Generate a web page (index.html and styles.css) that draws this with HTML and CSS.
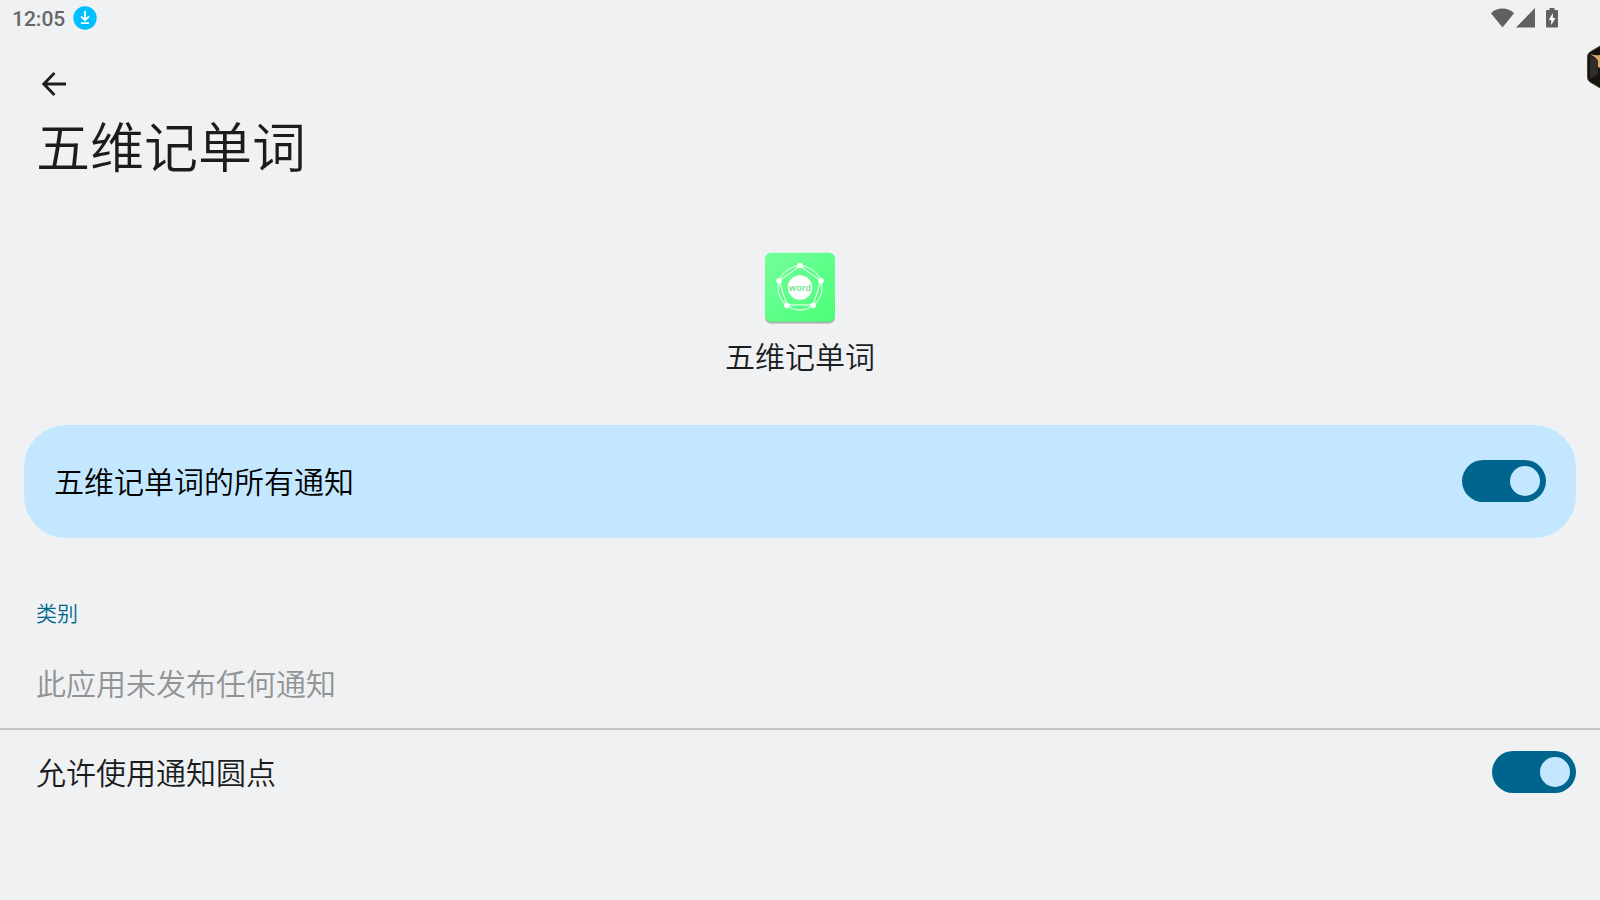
FILE: index.html
```html
<!DOCTYPE html>
<html lang="zh-CN">
<head>
    <meta charset="UTF-8">
    <meta name="viewport" content="width=device-width, initial-scale=1.0">
    <title>五维记单词</title>
    <link rel="stylesheet" href="styles.css">
</head>
<body>
    <div class="status-bar">
        <div class="status-left">
            <span class="clock">12:05</span>
            <svg class="download" width="24" height="24" viewBox="0 0 24 24" aria-hidden="true">
                <circle cx="12" cy="12" r="11.7" fill="#00bfff"/>
                <path d="M12 5v9M8 10.300l4 4 4-4M8 17.200h8" fill="none" stroke="#fff" stroke-width="1.8"/>
            </svg>
        </div>
        <div class="status-right">
            <svg width="24" height="20" viewBox="0 0 24 20" aria-hidden="true">
                <path d="M1 5.200C4 2 8 .5 12.500 .5s8.500 1.500 11.500 4.700L12.500 19.500z" fill="#5f6062"/>
            </svg>
            <svg width="19" height="20" viewBox="0 0 19 20" aria-hidden="true">
                <path d="M19 0v19.500H0z" fill="#5f6062"/>
            </svg>
            <svg class="battery" width="12" height="20" viewBox="0 0 12 20" aria-hidden="true">
                <path d="M3.500 0h5v2H11a1 1 0 0 1 1 1v15.500a1 1 0 0 1-1 1H1a1 1 0 0 1-1-1V3a1 1 0 0 1 1-1h2.500z" fill="#5f6062"/>
                <path d="M6.800 5v5H9.500L5.200 17v-5H2.800z" fill="#fff"/>
            </svg>
        </div>
    </div>

    <!-- botão flutuante preso na borda direita -->
    <div class="floating">
        <svg width="13" height="44" viewBox="0 0 13 44" aria-hidden="true">
            <path d="M14 .5L3 7Q.5 8.500 .5 11.500v21Q.5 35.500 3 37l11 6.500z" fill="#17140f" stroke="#4b4636"/>
            <path d="M3 11l8 4v14l-8 5z" fill="#302e2b"/>
            <path d="M3 9q6 2 10 1v13l-2-1v-6q-1-3-8-7z" fill="#d9a970"/>
        </svg>
    </div>

    <header class="header">
        <button type="button" class="back" aria-label="返回">
            <svg width="24" height="24" viewBox="0 0 24 24" aria-hidden="true">
                <path d="M24 12H2M12.500 1L1.800 12l10.700 11" fill="none" stroke="#1a1c1e" stroke-width="2.800"/>
            </svg>
        </button>
        <h1>五维记单词</h1>
    </header>

    <main>
        <section class="app">
            <svg class="app-icon" width="72" height="72" viewBox="0 0 72 72" aria-hidden="true">
                <defs>
                    <linearGradient id="verde" x1="0" y1="0" x2="1" y2="1">
                        <stop offset="0" stop-color="#73ff9c"/>
                        <stop offset="1" stop-color="#4bff77"/>
                    </linearGradient>
                </defs>
                <rect x="1" y="2" width="70" height="69.500" rx="6" fill="#a9b0ac"/>
                <rect x="1" y=".8" width="70" height="69" rx="6" fill="url(#verde)"/>
                <g fill="none" stroke="#fff">
                    <circle cx="36" cy="36" r="22"/>
                    <path d="M36 14l21 15-8 24H23l-8-24z"/>
                </g>
                <g fill="#fff">
                    <circle cx="36" cy="35.500" r="12.200"/>
                    <circle cx="36" cy="13.500" r="2.800"/>
                    <circle cx="57" cy="28.800" r="2.800"/>
                    <circle cx="49" cy="53.500" r="2.800"/>
                    <circle cx="23" cy="53.500" r="2.800"/>
                    <circle cx="15" cy="28.800" r="2.800"/>
                </g>
                <text class="word" x="36" y="39" text-anchor="middle">word</text>
            </svg>
            <p class="app-name">五维记单词</p>
        </section>

        <div class="card">
            <label for="todas">五维记单词的所有通知</label>
            <input type="checkbox" class="switch" id="todas" role="switch" checked>
        </div>

        <section class="category">
            <h2>类别</h2>
            <p>此应用未发布任何通知</p>
        </section>

        <div class="row">
            <label for="ponto">允许使用通知圆点</label>
            <input type="checkbox" class="switch" id="ponto" role="switch" checked>
        </div>
    </main>
</body>
</html>
```
FILE: styles.css
```css
body {
    font-family: Roboto, 'Noto Sans CJK SC', sans-serif;
    margin: 0;
    background-color: #eff1f3;
    color: #1a1c1e;
    font-size: 30px;
    font-weight: 350;
    line-height: 44px;
}
h1, h2, p {
    margin: 0;
    font-weight: inherit;
}
svg {
    display: block;
}
.status-bar {
    display: flex;
    justify-content: space-between;
    align-items: center;
    height: 36px;
    padding: 0 42px 0 12px;
}
.status-left, .status-right {
    display: flex;
    align-items: center;
}
.status-left {
    gap: 8px;
}
.status-right {
    gap: 2px;
}
.clock {
    font-size: 21px;
    font-weight: 500;
    line-height: 36px;
    padding-top: 2px;
    color: #66676a;
}
.battery {
    margin-left: 9px;
}
.floating {
    position: absolute;
    top: 45px;
    right: 0;
}
.header {
    padding: 30px 36px 0;
}
.back {
    display: flex;
    align-items: center;
    justify-content: center;
    width: 36px;
    height: 36px;
    padding: 0;
    border: none;
    background: none;
    cursor: pointer;
}
h1 {
    font-size: 54px;
    line-height: 80px;
    margin-top: 8px;
}
.app {
    display: flex;
    flex-direction: column;
    align-items: center;
    gap: 12px;
    margin-top: 62px;
}
.word {
    font-family: 'Open Sans', sans-serif;
    font-size: 9px;
    font-weight: 600;
    fill: #5fe58a;
}
.card {
    display: flex;
    justify-content: space-between;
    align-items: center;
    box-sizing: border-box;
    min-height: 113px;
    margin: 45px 24px 0;
    padding: 0 30px 1px;
    border-radius: 42px;
    background-color: #c3e7ff;
    color: #000;
}
label {
    padding-top: 3px;
}
.switch {
    appearance: none;
    display: flex;
    justify-content: flex-end;
    flex-shrink: 0;
    width: 84px;
    height: 42px;
    margin: 0;
    padding: 6px;
    box-sizing: border-box;
    border-radius: 21px;
    background-color: #00658e;
    cursor: pointer;
}
.switch::before {
    content: '';
    width: 30px;
    height: 30px;
    border-radius: 50%;
    background-color: #c3e7ff;
}
.switch:not(:checked) {
    justify-content: flex-start;
    background-color: #73777c;
}
.category {
    padding: 61px 36px 21px;
    border-bottom: 2px solid #c3c5c7;
}
.category h2 {
    font-size: 21px;
    line-height: 30px;
    color: #00658e;
}
.category p {
    margin-top: 34px;
    color: #929395;
}
.row {
    display: flex;
    justify-content: space-between;
    align-items: center;
    min-height: 84px;
    padding: 0 24px 0 36px;
}
```
